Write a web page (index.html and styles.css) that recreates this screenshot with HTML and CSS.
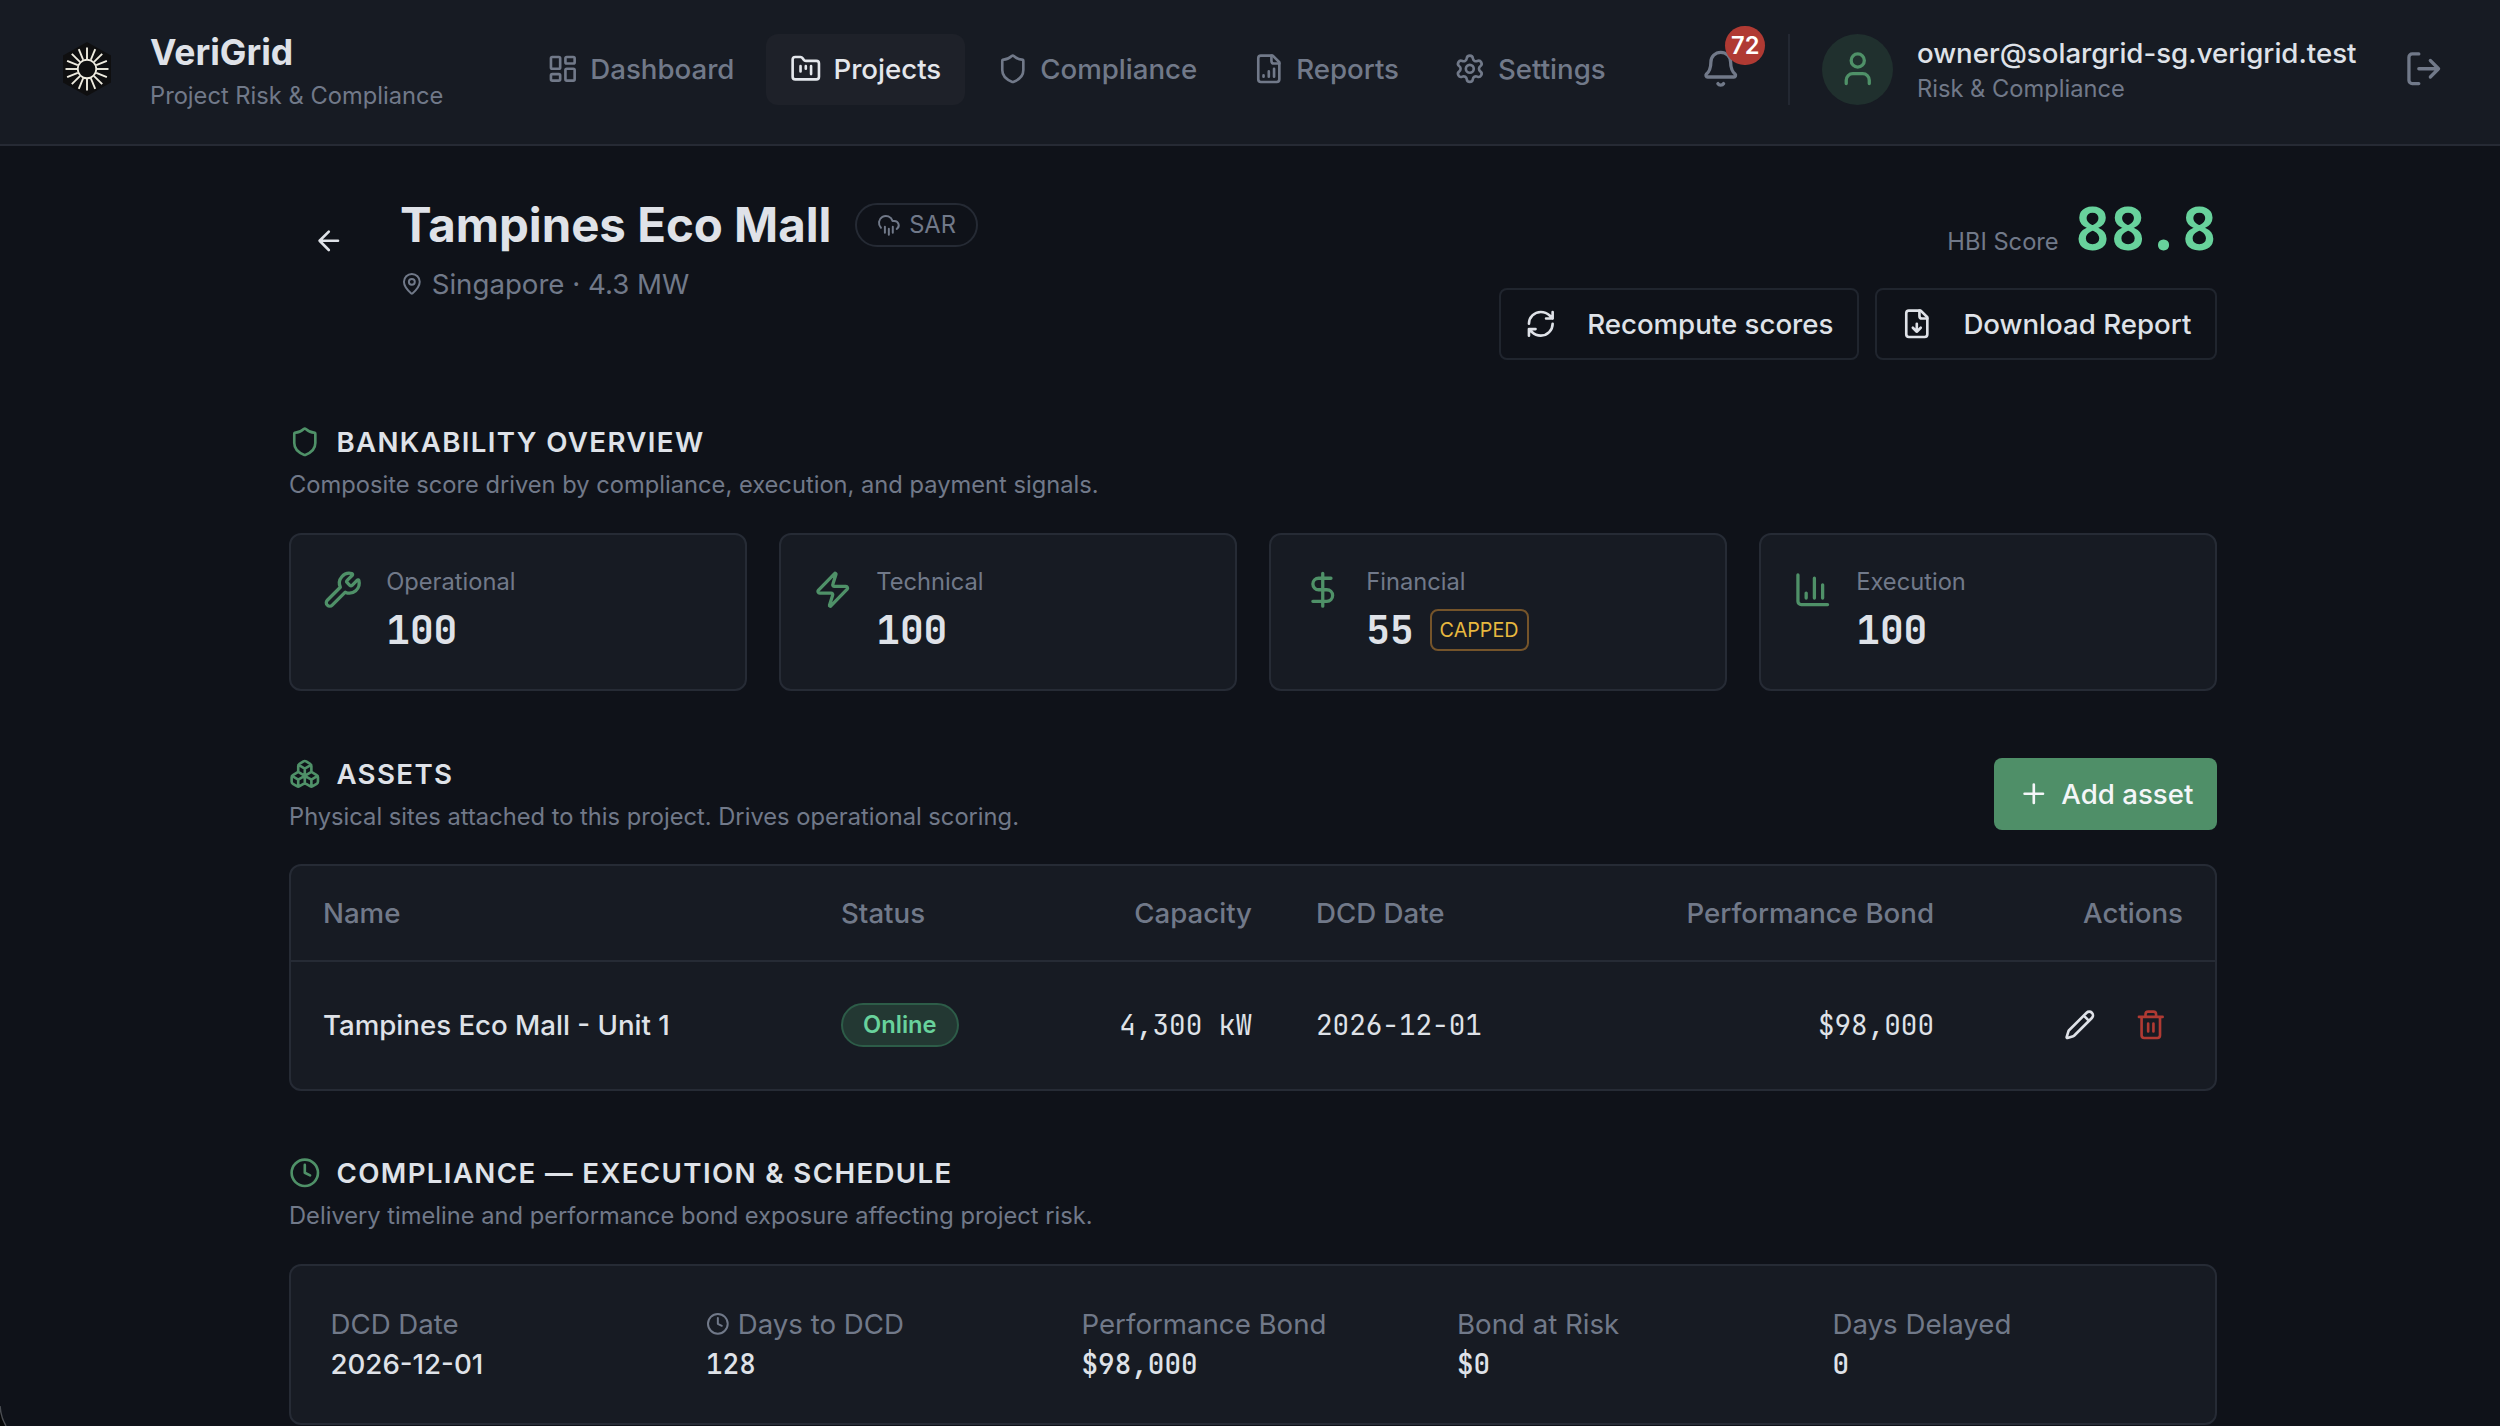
FILE: index.html
```html
<!DOCTYPE html>
<html lang="en">
<head>
<meta charset="utf-8">
<title>VeriGrid – Tampines Eco Mall</title>
<link rel="stylesheet" href="styles.css">
</head>
<body>
<header class="topbar">
  <svg class="logo" viewBox="0 0 48 54"><path fill="#0f0f10" d="M24 0 48 13.500V40.500L24 54 0 40.500V13.500z"/><circle cx="24" cy="27" r="9.300" fill="none" stroke="#efece0" stroke-width="1.900"/><g stroke="#efece0" stroke-width="1.900"><path id="ray" d="M24 17V5.500"/><use href="#ray" transform="rotate(22.5 24 27)"/><use href="#ray" transform="rotate(45 24 27)"/><use href="#ray" transform="rotate(67.5 24 27)"/><use href="#ray" transform="rotate(90 24 27)"/><use href="#ray" transform="rotate(112.5 24 27)"/><use href="#ray" transform="rotate(135 24 27)"/><use href="#ray" transform="rotate(157.5 24 27)"/><use href="#ray" transform="rotate(180 24 27)"/><use href="#ray" transform="rotate(202.5 24 27)"/><use href="#ray" transform="rotate(225 24 27)"/><use href="#ray" transform="rotate(247.5 24 27)"/><use href="#ray" transform="rotate(270 24 27)"/><use href="#ray" transform="rotate(292.5 24 27)"/><use href="#ray" transform="rotate(315 24 27)"/><use href="#ray" transform="rotate(337.5 24 27)"/></g></svg>
  <div class="brand"><div class="brand-name">VeriGrid</div><div class="brand-sub">Project Risk &amp; Compliance</div></div>
  <nav class="nav">
    <a class="nav-item"><svg class="icon" viewBox="0 0 24 24"><rect width="7" height="9" x="3" y="3" rx="1"/><rect width="7" height="5" x="14" y="3" rx="1"/><rect width="7" height="9" x="14" y="12" rx="1"/><rect width="7" height="5" x="3" y="16" rx="1"/></svg>Dashboard</a>
    <a class="nav-item active"><svg class="icon" viewBox="0 0 24 24"><path d="M4 20h16a2 2 0 0 0 2-2V8a2 2 0 0 0-2-2h-7.930a2 2 0 0 1-1.660-.9l-.82-1.200A2 2 0 0 0 7.930 3H4a2 2 0 0 0-2 2v13c0 1.100.9 2 2 2Z"/><path d="M8 10v4M12 10v2M16 10v6"/></svg>Projects</a>
    <a class="nav-item"><svg class="icon" viewBox="0 0 24 24"><path d="M20 13c0 5-3.500 7.500-7.660 8.950a1 1 0 0 1-.67-.01C7.500 20.500 4 18 4 13V6a1 1 0 0 1 1-1c2 0 4.500-1.200 6.240-2.720a1.170 1.170 0 0 1 1.520 0C14.510 3.810 17 5 19 5a1 1 0 0 1 1 1z"/></svg>Compliance</a>
    <a class="nav-item"><svg class="icon" viewBox="0 0 24 24"><path d="M15 2H6a2 2 0 0 0-2 2v16a2 2 0 0 0 2 2h12a2 2 0 0 0 2-2V7Z"/><path d="M14 2v4a2 2 0 0 0 2 2h4M8 18v-1M12 18v-4M16 18v-6"/></svg>Reports</a>
    <a class="nav-item"><svg class="icon" viewBox="0 0 24 24"><path d="M9.671 4.136a2.340 2.340 0 0 1 4.659 0 2.340 2.340 0 0 0 3.319 1.915 2.340 2.340 0 0 1 2.330 4.033 2.340 2.340 0 0 0 0 3.831 2.340 2.340 0 0 1-2.330 4.033 2.340 2.340 0 0 0-3.319 1.915 2.340 2.340 0 0 1-4.659 0 2.340 2.340 0 0 0-3.320-1.915 2.340 2.340 0 0 1-2.330-4.033 2.340 2.340 0 0 0 0-3.831A2.340 2.340 0 0 1 6.350 6.051a2.340 2.340 0 0 0 3.319-1.915"/><circle cx="12" cy="12" r="3"/></svg>Settings</a>
  </nav>
  <div class="bell"><svg class="icon lg" viewBox="0 0 24 24"><path d="M10.268 21a2 2 0 0 0 3.464 0M3.262 15.326A1 1 0 0 0 4 17h16a1 1 0 0 0 .74-1.673C19.410 13.956 18 12.499 18 8A6 6 0 0 0 6 8c0 4.499-1.411 5.956-2.738 7.326"/></svg><span class="count">72</span></div>
  <div class="user">
    <div class="avatar"><svg class="icon lg" viewBox="0 0 24 24"><path d="M19 21v-2a4 4 0 0 0-4-4H9a4 4 0 0 0-4 4v2"/><circle cx="12" cy="7" r="4"/></svg></div>
    <div><div class="user-mail">owner@solargrid-sg.verigrid.test</div><div class="user-role">Risk &amp; Compliance</div></div>
  </div>
  <svg class="icon lg logout" viewBox="0 0 24 24"><path d="m16 17 5-5-5-5M21 12H9M9 21H5a2 2 0 0 1-2-2V5a2 2 0 0 1 2-2h4"/></svg>
</header>

<main class="page">
  <div class="project-head">
    <div class="back"><svg class="icon" viewBox="0 0 24 24"><path d="m12 19-7-7 7-7M19 12H5"/></svg></div>
    <div class="project-info">
      <div class="title-row"><h1>Tampines Eco Mall</h1><span class="tag"><svg class="icon sm" viewBox="0 0 24 24"><path d="M4 14.899A7 7 0 1 1 15.710 8h1.790a4.500 4.500 0 0 1 2.500 8.242M16 14v6M8 14v6M12 16v6"/></svg>SAR</span></div>
      <div class="place"><svg class="icon sm" viewBox="0 0 24 24"><path d="M20 10c0 4.993-5.539 10.193-7.399 11.799a1 1 0 0 1-1.202 0C9.539 20.193 4 14.993 4 10a8 8 0 0 1 16 0"/><circle cx="12" cy="10" r="3"/></svg>Singapore · 4.3 MW</div>
    </div>
    <div class="head-side">
      <div class="score"><span class="score-label">HBI Score</span><span class="score-value">88.8</span></div>
      <div class="buttons">
        <a class="button"><svg class="icon" viewBox="0 0 24 24"><path d="M3 12a9 9 0 0 1 9-9 9.750 9.750 0 0 1 6.740 2.740L21 8M21 3v5h-5M21 12a9 9 0 0 1-9 9 9.750 9.750 0 0 1-6.740-2.740L3 16M8 16H3v5"/></svg>Recompute scores</a>
        <a class="button"><svg class="icon" viewBox="0 0 24 24"><path d="M15 2H6a2 2 0 0 0-2 2v16a2 2 0 0 0 2 2h12a2 2 0 0 0 2-2V7Z"/><path d="M14 2v4a2 2 0 0 0 2 2h4M12 18v-6M9 15l3 3 3-3"/></svg>Download Report</a>
      </div>
    </div>
  </div>

  <section class="section">
    <div class="section-head"><div>
      <h2><svg class="icon" viewBox="0 0 24 24"><path d="M20 13c0 5-3.500 7.500-7.660 8.950a1 1 0 0 1-.67-.01C7.500 20.500 4 18 4 13V6a1 1 0 0 1 1-1c2 0 4.500-1.200 6.240-2.720a1.170 1.170 0 0 1 1.520 0C14.510 3.810 17 5 19 5a1 1 0 0 1 1 1z"/></svg>BANKABILITY OVERVIEW</h2>
      <p>Composite score driven by compliance, execution, and payment signals.</p>
    </div></div>
    <div class="cards">
      <div class="card"><svg class="icon lg" viewBox="0 0 24 24"><path d="M14.700 6.300a1 1 0 0 0 0 1.400l1.600 1.600a1 1 0 0 0 1.400 0l3.106-3.105c.32-.322.863-.22.983.218a6 6 0 0 1-8.259 7.057l-7.910 7.910a1 1 0 0 1-2.999-3l7.910-7.910a6 6 0 0 1 7.057-8.259c.438.12.54.662.219.984z"/></svg><div><div class="card-label">Operational</div><div class="card-value">100</div></div></div>
      <div class="card"><svg class="icon lg" viewBox="0 0 24 24"><path d="M4 14a1 1 0 0 1-.78-1.630l9.900-10.200a.5.5 0 0 1 .86.46l-1.920 6.020A1 1 0 0 0 13 10h7a1 1 0 0 1 .78 1.630l-9.900 10.200a.5.5 0 0 1-.86-.46l1.920-6.020A1 1 0 0 0 11 14z"/></svg><div><div class="card-label">Technical</div><div class="card-value">100</div></div></div>
      <div class="card"><svg class="icon lg" viewBox="0 0 24 24"><path d="M12 2v20M17 5H9.500a3.500 3.500 0 0 0 0 7h5a3.500 3.500 0 0 1 0 7H6"/></svg><div><div class="card-label">Financial</div><div class="card-value">55<span class="capped">CAPPED</span></div></div></div>
      <div class="card"><svg class="icon lg" viewBox="0 0 24 24"><path d="M3 3v16a2 2 0 0 0 2 2h16M18 17V9M13 17V5M8 17v-3"/></svg><div><div class="card-label">Execution</div><div class="card-value">100</div></div></div>
    </div>
  </section>

  <section class="section assets">
    <div class="section-head"><div>
      <h2><svg class="icon" viewBox="0 0 24 24"><path d="M2.970 12.920A2 2 0 0 0 2 14.630v3.240a2 2 0 0 0 .97 1.710l3 1.800a2 2 0 0 0 2.060 0L12 19v-5.500l-5-3-4.030 2.420ZM7 16.500l-4.740-2.850M7 16.500l5-3M7 16.500v5.170M12 13.500V19l3.970 2.380a2 2 0 0 0 2.060 0l3-1.800a2 2 0 0 0 .97-1.710v-3.240a2 2 0 0 0-.97-1.710L17 10.500l-5 3ZM17 16.500l-5-3M17 16.500l4.740-2.850M17 16.500v5.170M7.970 4.420A2 2 0 0 0 7 6.130v4.370l5 3 5-3V6.130a2 2 0 0 0-.97-1.710l-3-1.800a2 2 0 0 0-2.060 0l-3 1.800ZM12 8 7.260 5.150M12 8l4.740-2.850M12 13.500V8"/></svg>ASSETS</h2>
      <p>Physical sites attached to this project. Drives operational scoring.</p>
    </div><a class="add"><svg class="icon" viewBox="0 0 24 24"><path d="M5 12h14M12 5v14"/></svg>Add asset</a></div>
    <div class="table-box">
      <table>
        <colgroup><col class="c-name"><col class="c-status"><col class="c-cap"><col class="c-date"><col class="c-bond"><col class="c-act"></colgroup>
        <thead><tr><th>Name</th><th>Status</th><th class="r">Capacity</th><th>DCD Date</th><th class="r">Performance Bond</th><th class="r">Actions</th></tr></thead>
        <tbody><tr><td class="name">Tampines Eco Mall - Unit 1</td><td><span class="pill">Online</span></td><td class="r mono">4,300 kW</td><td class="mono">2026-12-01</td><td class="r mono">$98,000</td>
        <td><div class="actions"><svg class="icon" viewBox="0 0 24 24"><path d="M21.174 6.812a1 1 0 0 0-3.986-3.987L3.842 16.174a2 2 0 0 0-.5.83l-1.321 4.352a.5.5 0 0 0 .623.622l4.353-1.320a2 2 0 0 0 .83-.497zM15 5l4 4"/></svg><svg class="icon danger" viewBox="0 0 24 24"><path d="M10 11v6M14 11v6M19 6v14a2 2 0 0 1-2 2H7a2 2 0 0 1-2-2V6M3 6h18M8 6V4a2 2 0 0 1 2-2h4a2 2 0 0 1 2 2v2"/></svg></div></td></tr></tbody>
      </table>
    </div>
  </section>

  <section class="section schedule">
    <div class="section-head"><div>
      <h2><svg class="icon" viewBox="0 0 24 24"><path d="M12 6v6l4 2"/><circle cx="12" cy="12" r="10"/></svg>COMPLIANCE — EXECUTION &amp; SCHEDULE</h2>
      <p>Delivery timeline and performance bond exposure affecting project risk.</p>
    </div></div>
    <dl class="facts">
      <div><dt>DCD Date</dt><dd>2026-12-01</dd></div>
      <div><dt><svg class="icon sm" viewBox="0 0 24 24"><path d="M12 6v6l4 2"/><circle cx="12" cy="12" r="10"/></svg>Days to DCD</dt><dd class="mono">128</dd></div>
      <div><dt>Performance Bond</dt><dd class="mono">$98,000</dd></div>
      <div><dt>Bond at Risk</dt><dd class="mono">$0</dd></div>
      <div><dt>Days Delayed</dt><dd class="mono">0</dd></div>
    </dl>
  </section>
</main>
<svg class="window-corner" viewBox="0 0 8 20"><path d="M0 0Q1 12 6 20H0z" fill="#050607"/><path d="M0 0Q1 12 6 20" fill="none" stroke="#4a4d52" stroke-width="1.500"/></svg>
</body>
</html>
```
FILE: styles.css
```css
* { box-sizing: border-box; margin: 0; padding: 0; }
html, body { height: 1426px; overflow: hidden; }
body {
  position: relative;
  background: #0f1219;
  color: #dfe2e8;
  font: 400 27.65px/40px Inter, "Liberation Sans", sans-serif;
}
.mono, .score-value, .card-value { font-family: "JetBrains Mono", "DejaVu Sans Mono", monospace; }

.icon {
  flex: none;
  width: 31.6px;
  height: 31.6px;
  fill: none;
  stroke: currentColor;
  stroke-width: 2;
  stroke-linecap: round;
  stroke-linejoin: round;
}
.icon.lg { width: 39.5px; height: 39.5px; }
.icon.sm { width: 23.7px; height: 23.7px; }

/* Top bar */
.topbar {
  display: flex;
  align-items: center;
  height: 146px;
  padding: 0 57px 6px 63px;
  background: #171b23;
  border-bottom: 2px solid #262a34;
}
.logo { flex: none; width: 48px; height: 54px; }
.brand { width: 373px; margin-left: 39px; padding-top: 11px; }
.brand-name { font-size: 35.5px; line-height: 42px; font-weight: 700; }
.brand-sub { font-size: 23.7px; line-height: 43px; color: #717989; white-space: nowrap; }
.nav { display: flex; gap: 8px; }
.nav-item {
  display: flex;
  align-items: center;
  gap: 12px;
  height: 71px;
  padding: 0 23.7px;
  border-radius: 12px;
  color: #717989;
  font-weight: 500;
}
.nav-item.active { background: #1e2129; color: #e4e7ec; }
.bell { position: relative; display: flex; margin-left: auto; color: #717989; }
.count {
  position: absolute;
  left: 24px;
  top: -23.5px;
  width: 39.5px;
  height: 39.5px;
  border-radius: 50%;
  background: #b03a33;
  color: #fff;
  font-size: 23.7px;
  line-height: 39px;
  font-weight: 600;
  text-align: center;
}
.user {
  display: flex;
  align-items: center;
  gap: 24px;
  height: 71px;
  margin-left: 47px;
  padding-left: 32px;
  border-left: 2px solid #232832;
}
.avatar {
  display: flex;
  align-items: center;
  justify-content: center;
  width: 71px;
  height: 71px;
  border-radius: 50%;
  background: #20302e;
  color: #4f9168;
}
.user-mail { padding-top: 3px; font-weight: 500; line-height: 36px; }
.user-role { font-size: 23.7px; line-height: 35px; color: #717989; }
.logout { margin-left: 47px; color: #717989; }

/* Project heading */
.page { width: 1928px; margin-left: 289px; padding-top: 50px; }
.project-head { display: flex; height: 164px; }
.back { width: 111px; padding: 29px 0 0 24px; }
.title-row { display: flex; align-items: center; gap: 24px; height: 58px; }
h1 { font-size: 47.4px; line-height: 58px; font-weight: 700; }
.tag {
  display: flex;
  align-items: center;
  gap: 8px;
  height: 44px;
  padding: 0 20px;
  border: 2px solid #252a34;
  border-radius: 22px;
  color: #717989;
  font-size: 23.7px;
}
.place { display: flex; align-items: center; gap: 8px; margin-top: 10px; color: #717989; }
.head-side { margin-left: auto; }
.score { display: flex; justify-content: flex-end; align-items: baseline; gap: 16px; height: 92px; }
.score-label { font-size: 23.7px; color: #717989; }
.score-value { font-size: 59.3px; line-height: 66px; font-weight: 700; color: #68d29c; }
.buttons { display: flex; gap: 16px; }
.button {
  display: flex;
  align-items: center;
  gap: 31px;
  height: 72px;
  padding: 0 23.7px;
  border: 2px solid #20252e;
  border-radius: 8px;
  font-weight: 500;
}

/* Sections */
.section { padding-top: 66px; }
.section-head { display: flex; justify-content: space-between; height: 107px; }
h2 {
  display: flex;
  align-items: center;
  gap: 15.8px;
  height: 32px;
  font-size: 27.65px;
  font-weight: 600;
  letter-spacing: 1.38px;
}
h2 .icon { color: #4f9168; }
.section-head p { margin-top: 7px; font-size: 23.7px; color: #717989; }
.cards { display: grid; grid-template-columns: repeat(4, 1fr); gap: 32px; }
.card {
  display: flex;
  gap: 23.7px;
  height: 158px;
  padding: 35px 32px;
  border: 2px solid #262b35;
  border-radius: 12px;
  background: #171b23;
}
.card .icon { color: #4f9168; }
.card-label { margin-top: -8px; font-size: 23.7px; color: #717989; }
.card-value {
  display: flex;
  align-items: center;
  gap: 16px;
  height: 56px;
  font-size: 39.5px;
  font-weight: 700;
}
.capped {
  padding: 0 8px;
  border: 2px solid #75542a;
  border-radius: 8px;
  color: #e8b83f;
  font: 400 19.75px/38px Inter, sans-serif;
}

.assets .section-head { height: 106px; }
.assets { padding-top: 67px; }
.add {
  display: flex;
  align-items: center;
  gap: 12px;
  height: 72px;
  padding: 0 23.7px;
  border-radius: 8px;
  background: #4f8f68;
  color: #f4f6f8;
  font-weight: 500;
}
.table-box {
  height: 227px;
  border: 2px solid #262b35;
  border-radius: 12px;
  background: #171b23;
}
table { width: 1924px; table-layout: fixed; border-collapse: collapse; }
.c-name { width: 518px; }
.c-status { width: 236px; }
.c-cap { width: 239px; }
.c-date { width: 300px; }
.c-bond { width: 382px; }
.c-act { width: 249px; }
th { height: 95px; padding: 0 32px; color: #717989; font-weight: 500; text-align: left; border-bottom: 2px solid #262b35; }
td { height: 127px; padding: 0 32px; }
th.r, td.r { text-align: right; }
.name { font-weight: 500; }
.pill {
  display: inline-block;
  padding: 0 20px;
  border: 2px solid #2d5c48;
  border-radius: 22px;
  background: #233833;
  color: #68d29c;
  font-size: 23.7px;
  line-height: 40px;
  font-weight: 600;
}
.actions { display: flex; justify-content: flex-end; gap: 39.5px; padding-right: 16px; }
.danger { color: #b03a33; }

.schedule { padding-top: 66px; }
.facts {
  display: grid;
  grid-template-columns: repeat(5, 343.5px);
  gap: 32px;
  height: 161px;
  padding: 38px 39.5px;
  border: 2px solid #262b35;
  border-radius: 12px;
  background: #171b23;
}
dt { display: flex; align-items: center; gap: 8px; color: #717989; }
dd { font-weight: 500; }

.window-corner { position: absolute; left: 0; bottom: 0; width: 8px; height: 20px; }
```
